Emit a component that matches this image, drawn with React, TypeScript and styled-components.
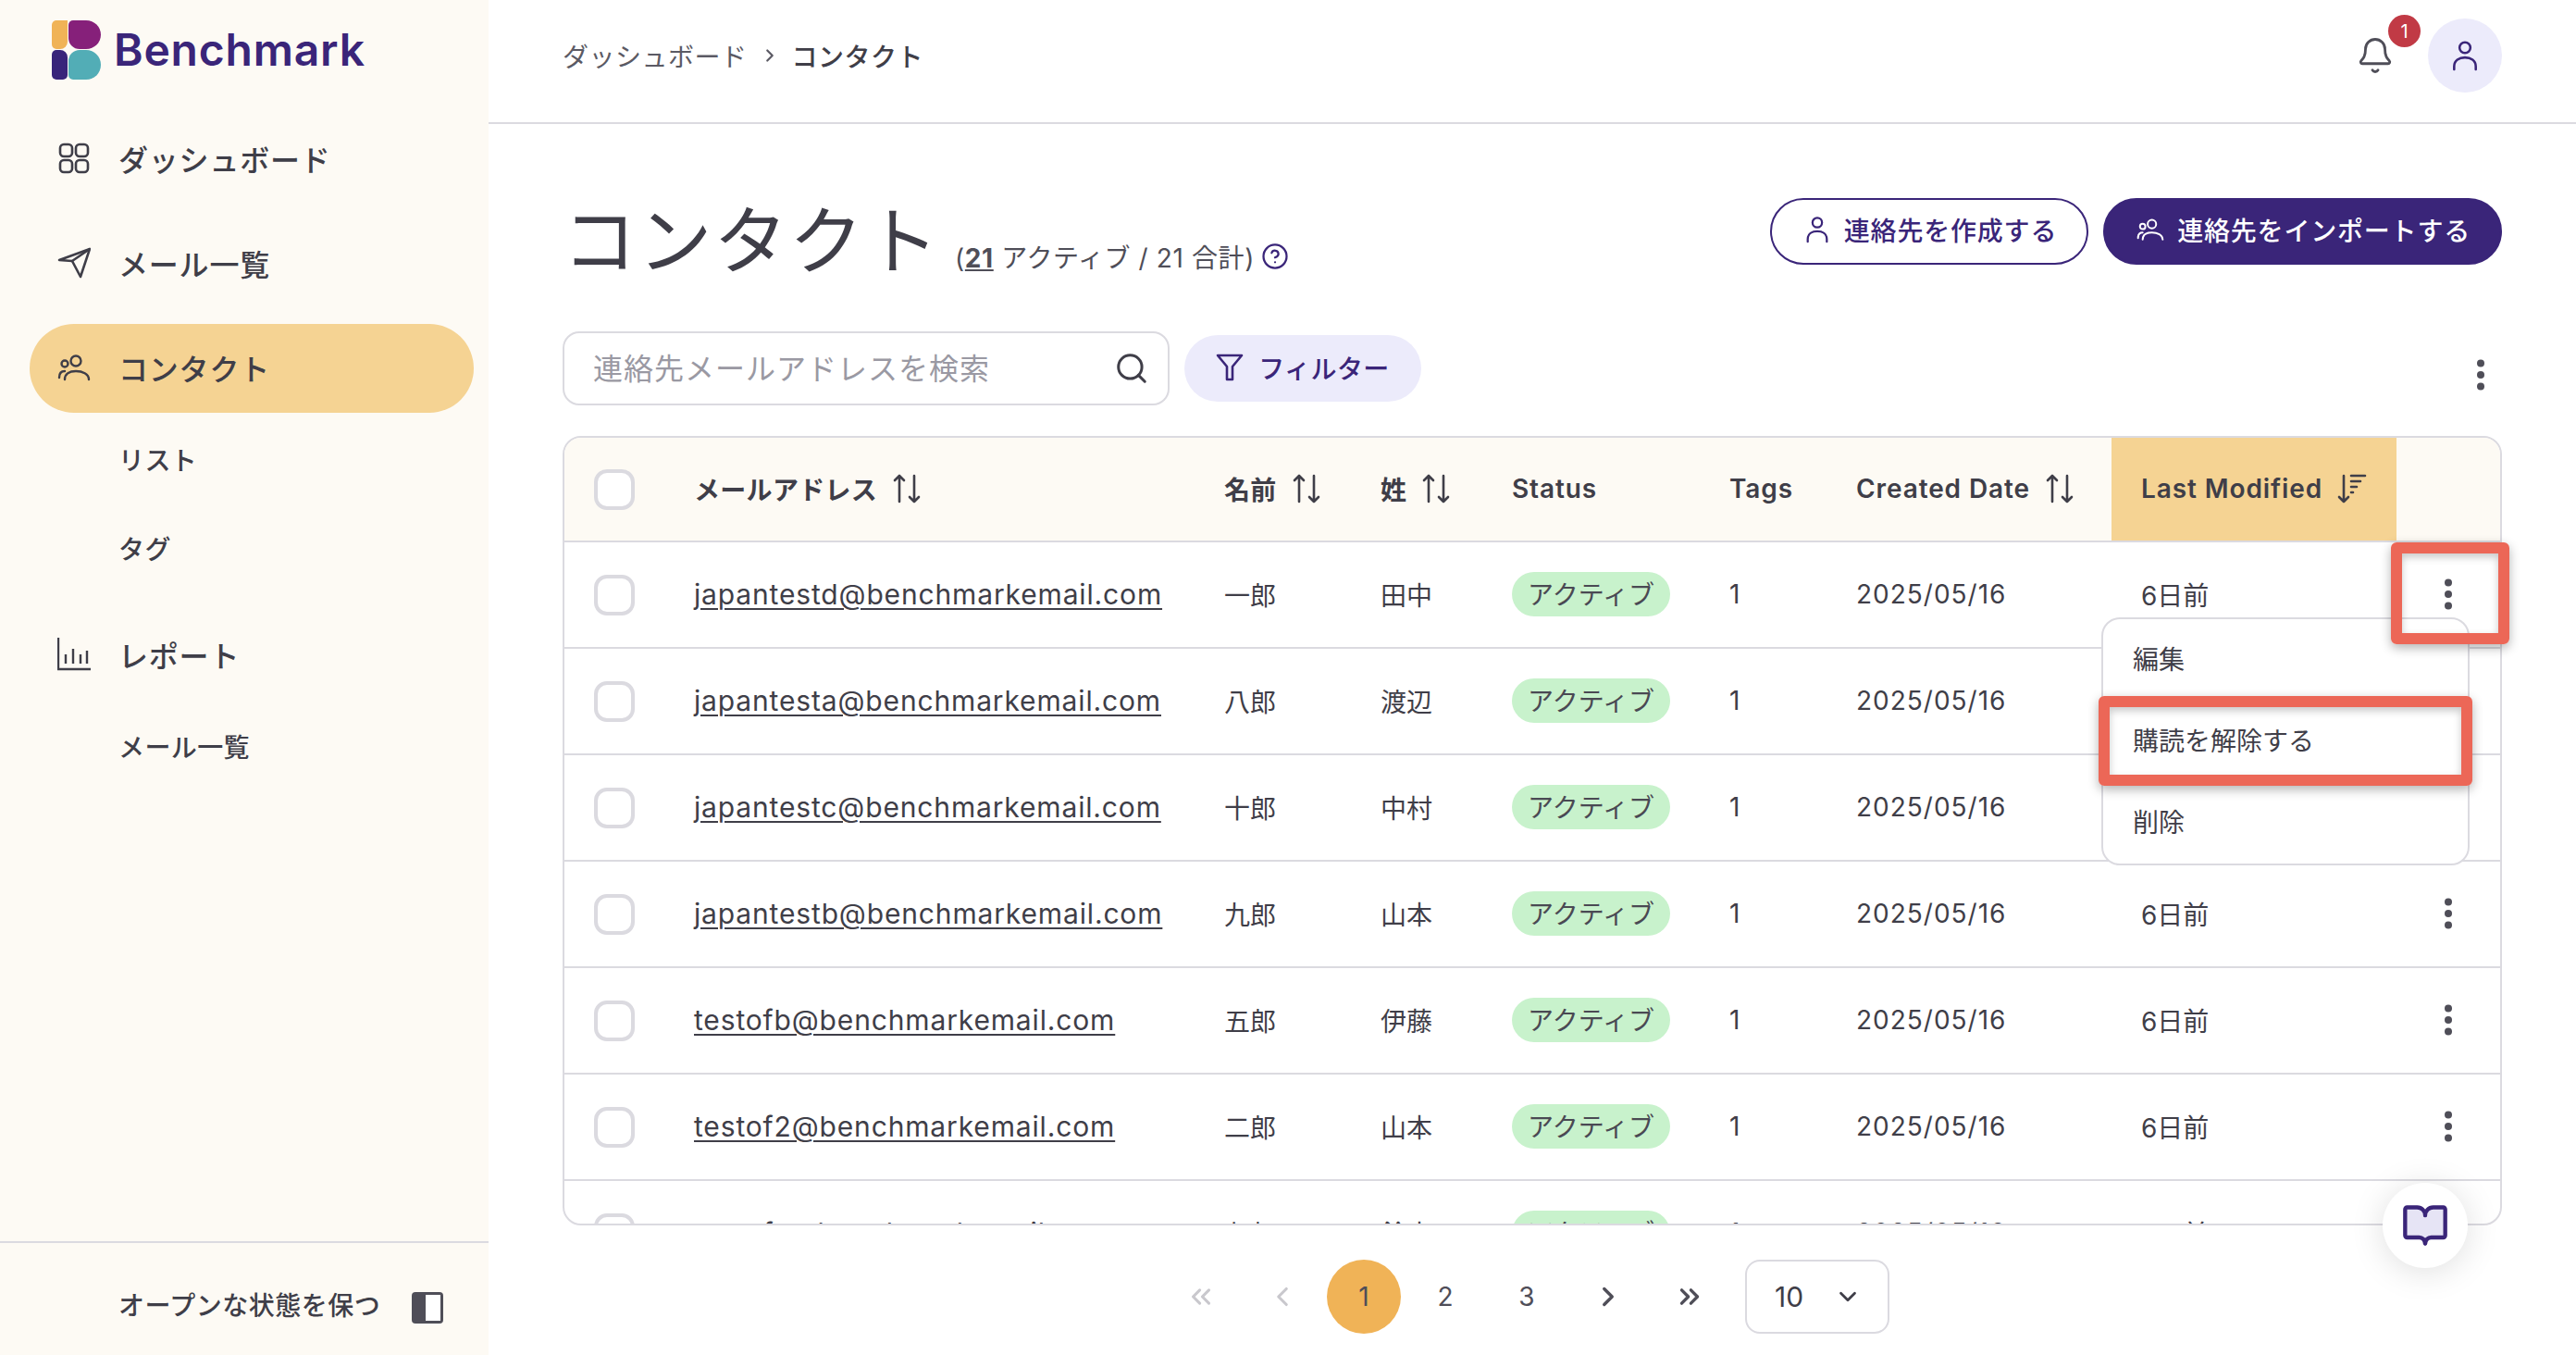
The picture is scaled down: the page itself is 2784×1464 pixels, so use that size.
import React from "react";
import styled, { createGlobalStyle } from "styled-components";
import { Bell, BookOpen, ChevronDown, ChevronLeft, ChevronRight, ChevronsLeft, ChevronsRight, CircleHelp, Search } from "lucide-react";

const ink = "#3f3e48";
const brand = "#3a2579";
const line = "#dbdae0";
const cream = "#fdfaf4";
const lavender = "#ecebfb";

const GlobalStyle = createGlobalStyle`
  html, body {
    margin: 0;
    padding: 0;
    background: #fff;
  }
  body {
    font-family: Inter, "Noto Sans CJK JP", sans-serif;
    color: ${ink};
  }
  * { box-sizing: border-box; }
`;

const Page = styled.div`
  display: flex;
  width: 2784px;
  height: 1464px;
  overflow: hidden;
  background: #fff;
`;

/* sidebar */
const Sidebar = styled.aside`
  width: 528px;
  flex-shrink: 0;
  background: ${cream};
  display: flex;
  flex-direction: column;
`;
const Brand = styled.div`
  height: 124px;
  padding: 22px 0 0 56px;
  display: flex;
  align-items: flex-start;
  gap: 14px;
`;
const BrandName = styled.span`
  font-size: 48px;
  line-height: 64px;
  font-weight: 600;
  letter-spacing: 0.8px;
  color: ${brand};
`;
const Nav = styled.nav`
  flex: 1;
  display: flex;
  flex-direction: column;
  gap: 17px;
`;
const NavGroup = styled.div`
  display: flex;
  flex-direction: column;
`;
const NavItem = styled.a<{ $active?: boolean }>`
  height: 96px;
  margin: 0 16px 0 32px;
  padding: 0 0 2px 30px;
  display: flex;
  align-items: center;
  gap: 30px;
  border-radius: 48px;
  font-size: 32px;
  font-weight: 500;
  letter-spacing: 0.8px;
  color: ${ink};
  background: ${(p) => (p.$active ? "#f5d393" : "transparent")};
`;
const SubList = styled.div`
  margin: 3px 0 2px;
  display: flex;
  flex-direction: column;
`;
const SubItem = styled.a`
  height: 96px;
  padding: 0 0 2px 128px;
  display: flex;
  align-items: center;
  font-size: 28px;
  font-weight: 500;
  letter-spacing: 0.4px;
  color: ${ink};
`;
const SidebarFoot = styled.div`
  height: 123px;
  border-top: 2px solid ${line};
  padding: 10px 48px 0 128px;
  display: flex;
  align-items: center;
  justify-content: space-between;
  font-size: 28px;
  font-weight: 500;
  letter-spacing: 0.5px;
  color: ${ink};
`;
const PanelToggle = styled.span`
  display: flex;
  margin-top: 8px;
`;

/* main */
const Main = styled.main`
  flex: 1;
  min-width: 0;
  display: flex;
  flex-direction: column;
`;
const TopBar = styled.header`
  height: 134px;
  flex-shrink: 0;
  border-bottom: 2px solid ${line};
  padding: 0 80px 12px 80px;
  display: flex;
  align-items: center;
  justify-content: space-between;
`;
const Crumbs = styled.div`
  display: flex;
  align-items: center;
  gap: 13px;
  font-size: 28px;
  letter-spacing: 0.5px;
  color: #5b5a64;
`;
const CrumbCurrent = styled.span`
  font-weight: 500;
  color: ${ink};
`;
const TopActions = styled.div`
  display: flex;
  align-items: center;
  gap: 35px;
`;
const BellWrap = styled.div`
  position: relative;
  width: 44px;
  height: 44px;
  display: flex;
  align-items: center;
  justify-content: center;
  color: #4f4e58;
`;
const Badge = styled.span`
  position: absolute;
  top: -22px;
  left: 36px;
  width: 35px;
  height: 35px;
  border-radius: 50%;
  background: #c13a45;
  color: #fff;
  font-size: 20px;
  display: flex;
  align-items: center;
  justify-content: center;
`;
const Avatar = styled.div`
  width: 80px;
  height: 80px;
  border-radius: 50%;
  background: ${lavender};
  color: ${brand};
  display: flex;
  align-items: center;
  justify-content: center;
`;
const Content = styled.div`
  flex: 1;
  padding: 80px 80px 0 80px;
  display: flex;
  flex-direction: column;
`;
const TitleRow = styled.div`
  height: 72px;
  display: flex;
  justify-content: space-between;
`;
const TitleGroup = styled.div`
  display: flex;
  align-items: baseline;
  height: 92px;
`;
const Title = styled.h1`
  margin: 0;
  font-size: 80px;
  line-height: 92px;
  font-weight: 400;
  letter-spacing: 1.6px;
  color: ${ink};
`;
const Counts = styled.span`
  margin-left: 16px;
  padding-top: 4px;
  font-size: 28px;
  letter-spacing: 0.6px;
  color: #4f4e58;
  display: inline-flex;
  align-items: center;
  gap: 7px;
`;
const CountStrong = styled.b`
  font-weight: 700;
  text-decoration: underline;
`;
const HelpIcon = styled(CircleHelp)`
  color: ${brand};
  align-self: center;
`;
const Actions = styled.div`
  display: flex;
  gap: 16px;
`;
const PillButton = styled.button<{ $solid?: boolean }>`
  height: 72px;
  padding: 0 32px 5px 34px;
  border-radius: 36px;
  border: 2px solid ${brand};
  background: ${(p) => (p.$solid ? brand : "#fff")};
  color: ${(p) => (p.$solid ? "#fff" : brand)};
  font-family: inherit;
  font-size: 28px;
  font-weight: 500;
  letter-spacing: 0.8px;
  display: flex;
  align-items: center;
  gap: 14px;
`;
const Toolbar = styled.div`
  margin-top: 72px;
  height: 80px;
  display: flex;
  align-items: center;
  gap: 16px;
`;
const SearchBox = styled.div`
  width: 656px;
  height: 80px;
  border: 2px solid ${line};
  border-radius: 18px;
  padding: 0 20px 0 31px;
  display: flex;
  align-items: center;
  justify-content: space-between;
  background: #fff;
`;
const SearchInput = styled.input`
  flex: 1;
  min-width: 0;
  border: 0;
  outline: 0;
  padding: 0;
  background: transparent;
  font-family: inherit;
  font-size: 32px;
  letter-spacing: 1px;
  color: ${ink};
  &::placeholder {
    color: #9a99a3;
    opacity: 1;
  }
`;
const FilterButton = styled.button`
  height: 72px;
  width: 256px;
  padding: 0 0 2px;
  border: 0;
  border-radius: 36px;
  background: ${lavender};
  color: ${brand};
  font-family: inherit;
  font-size: 28px;
  font-weight: 500;
  letter-spacing: 0.4px;
  display: flex;
  align-items: center;
  justify-content: center;
  gap: 16px;
`;
const ToolbarMore = styled.div`
  margin-left: auto;
  margin-right: 18px;
  margin-top: 14px;
  display: flex;
  color: #4f4e58;
`;

/* table */
const TableArea = styled.div`
  position: relative;
  margin-top: 33px;
  height: 853px;
`;
const Table = styled.div`
  height: 100%;
  border: 2px solid ${line};
  border-radius: 20px;
  overflow: hidden;
  font-size: 28px;
`;
const columns = "140px 573px 169px 142px 235px 137px 276px 308px 1fr";
const HeadRow = styled.div`
  display: grid;
  grid-template-columns: ${columns};
  height: 113px;
  border-bottom: 2px solid ${line};
  background: ${cream};
  font-weight: 600;
  letter-spacing: 0.3px;
`;
const Row = styled.div`
  display: grid;
  grid-template-columns: ${columns};
  height: 115px;
  border-bottom: 2px solid ${line};
`;
const Cell = styled.div<{ $sorted?: boolean; $inset?: boolean }>`
  display: flex;
  align-items: center;
  gap: 16px;
  padding: 0 0 2px ${(p) => (p.$inset ? "32px" : "0")};
  background: ${(p) => (p.$sorted ? "#f5d393" : "transparent")};
  letter-spacing: inherit;
`;
const CheckCell = styled(Cell)`
  padding: 0 0 0 32px;
`;
const Check = styled.span`
  width: 44px;
  height: 44px;
  border: 4px solid ${line};
  border-radius: 14px;
  background: #fff;
`;
const LatinHead = styled.span`
  letter-spacing: 0.9px;
`;
const EmailLink = styled.a`
  color: ${ink};
  text-decoration: underline;
  text-underline-offset: 4px;
  text-decoration-thickness: 2px;
  font-size: 30px;
  font-weight: 400;
  letter-spacing: 0.85px;
`;
const StatusBadge = styled.span`
  width: 171px;
  height: 48px;
  padding-bottom: 2px;
  border-radius: 24px;
  background: #c8f2cc;
  display: flex;
  align-items: center;
  justify-content: center;
  color: #4a4953;
`;
const NumText = styled.span`
  letter-spacing: 1px;
`;
const MoreCell = styled(Cell)`
  justify-content: center;
  color: #4f4e58;
`;
const Menu = styled.div`
  position: absolute;
  top: 196px;
  right: 35px;
  width: 398px;
  border: 2px solid ${line};
  border-radius: 20px;
  background: #fff;
  z-index: 2;
`;
const MenuItem = styled.div`
  height: 88px;
  padding: 0 0 5px 32px;
  display: flex;
  align-items: center;
  font-size: 28px;
  color: ${ink};
`;
const Callout = styled.div<{ $top: number; $right: number; $w: number; $h: number }>`
  position: absolute;
  top: ${(p) => p.$top}px;
  right: ${(p) => p.$right}px;
  width: ${(p) => p.$w}px;
  height: ${(p) => p.$h}px;
  border: 12px solid #ec6757;
  border-radius: 6px;
  box-shadow: 0 4px 12px rgba(0, 0, 0, 0.3), inset 0 4px 8px rgba(0, 0, 0, 0.22);
  z-index: 3;
`;
const GuideButton = styled.div`
  position: absolute;
  right: 37px;
  bottom: -46px;
  width: 92px;
  height: 92px;
  border-radius: 50%;
  background: #fff;
  box-shadow: 0 4px 36px rgba(0, 0, 0, 0.13);
  color: ${brand};
  display: flex;
  align-items: center;
  justify-content: center;
  z-index: 2;
`;

/* pagination */
const Pager = styled.div`
  margin-top: 37px;
  padding-right: 12px;
  display: flex;
  align-items: center;
  justify-content: center;
  gap: 8px;
`;
const PageBtn = styled.span<{ $current?: boolean; $muted?: boolean }>`
  width: 80px;
  height: 80px;
  border-radius: 50%;
  display: flex;
  align-items: center;
  justify-content: center;
  font-size: 28px;
  background: ${(p) => (p.$current ? "#f0b357" : "transparent")};
  color: ${(p) => (p.$muted ? "#c9c8cd" : "#4f4e58")};
`;
const PageSize = styled.div`
  margin-left: 12px;
  width: 156px;
  height: 80px;
  border: 2px solid ${line};
  border-radius: 16px;
  padding: 0 28px 0 30px;
  display: flex;
  align-items: center;
  justify-content: space-between;
  font-size: 30px;
`;

/* drawn icons */
const Logo = () => (
  <svg width="53" height="64" viewBox="0 0 53 64">
    <path d="M5 0h12v23a8 8 0 0 1-8 8H5a5 5 0 0 1-5-5V5a5 5 0 0 1 5-5z" fill="#f0b357" />
    <path d="M23 0h14c9 0 16 7 16 15.500S46 31 37 31H30a12 12 0 0 1-12-12V5a5 5 0 0 1 5-5z" fill="#86207a" />
    <path d="M9 32a8 8 0 0 1 8 8v19a5 5 0 0 1-5 5H5a5 5 0 0 1-5-5V37a5 5 0 0 1 5-5z" fill="#38247a" />
    <path d="M30 32h7c9 0 16 7 16 16s-7 16-16 16H23a5 5 0 0 1-5-5V44a12 12 0 0 1 12-12z" fill="#52adb6" />
  </svg>
);
const GridIcon = () => (
  <svg width="36" height="36" viewBox="0 0 36 36" fill="none" stroke="currentColor" strokeWidth="2.6">
    <rect x="3" y="3" width="13" height="13" rx="4" />
    <rect x="20" y="3" width="13" height="13" rx="4" />
    <rect x="3" y="20" width="13" height="13" rx="4" />
    <rect x="20" y="20" width="13" height="13" rx="4" />
  </svg>
);
const SendIcon = () => (
  <svg width="36" height="36" viewBox="0 0 36 36" fill="none" stroke="currentColor" strokeWidth="2.6" strokeLinejoin="round" strokeLinecap="round">
    <path d="M2 15 35 3 25 33 16 16z" />
    <path d="M16 16 35 3" />
  </svg>
);
const UsersIcon = ({ size = 36 }: { size?: number }) => (
  <svg width={size} height={size} viewBox="0 0 36 36" fill="none" stroke="currentColor" strokeWidth="2.4" strokeLinecap="round">
    <circle cx="20" cy="11" r="5.500" />
    <path d="M8 31c0-6 5-9 12-9s14 3 14 9" />
    <circle cx="8" cy="14" r="3.500" />
    <path d="M2 29c0-4 2-7 6-7" />
  </svg>
);
const ChartIcon = () => (
  <svg width="36" height="36" viewBox="0 0 36 36" fill="none" stroke="currentColor" strokeWidth="2.4">
    <path d="M1 0v34h35" />
    <path d="M9 18v10M17 12v16M25 18v10M32 14v14" />
  </svg>
);
const UserIcon = ({ size = 32 }: { size?: number }) => (
  <svg width={size} height={size} viewBox="0 0 32 32" fill="none" stroke="currentColor" strokeWidth="2.4" strokeLinecap="round">
    <circle cx="16" cy="8" r="5.500" />
    <path d="M5 30v-3c0-6 5-9 11-9s11 3 11 9v3" />
  </svg>
);
const SortIcon = () => (
  <svg width="32" height="32" viewBox="0 0 32 32" fill="none" stroke="currentColor" strokeWidth="2.6" strokeLinecap="round" strokeLinejoin="round">
    <path d="M8 2v28M3 7l5-5 5 5" />
    <path d="M24 30V2M19 25l5 5 5-5" />
  </svg>
);
const SortedIcon = () => (
  <svg width="32" height="32" viewBox="0 0 32 32" fill="none" stroke="currentColor" strokeWidth="2.6" strokeLinecap="round" strokeLinejoin="round">
    <path d="M7 2v28M2 25l5 5 5-5" />
    <path d="M15 2h15M15 8h10M15 14h6M15 20h2" />
  </svg>
);
const FilterIcon = () => (
  <svg width="30" height="32" viewBox="0 0 30 32" fill="none" stroke="currentColor" strokeWidth="2.6" strokeLinejoin="round">
    <path d="M2 3h26L18 15v14h-6V15z" />
  </svg>
);
const Dots = () => (
  <svg width="10" height="34" viewBox="0 0 10 34" fill="currentColor">
    <circle cx="5" cy="4.500" r="4" />
    <circle cx="5" cy="17" r="4" />
    <circle cx="5" cy="29.500" r="4" />
  </svg>
);
const PanelIcon = () => (
  <svg width="36" height="36" viewBox="0 0 36 36">
    <rect x="1" y="1" width="34" height="34" rx="4" fill="#4f4e58" />
    <rect x="16" y="4" width="16" height="28" fill="#fff" />
  </svg>
);

const rows = [
  ["japantestd@benchmarkemail.com", "一郎", "田中"],
  ["japantesta@benchmarkemail.com", "八郎", "渡辺"],
  ["japantestc@benchmarkemail.com", "十郎", "中村"],
  ["japantestb@benchmarkemail.com", "九郎", "山本"],
  ["testofb@benchmarkemail.com", "五郎", "伊藤"],
  ["testof2@benchmarkemail.com", "二郎", "山本"],
  ["testofa@benchmarkemail.com", "七郎", "鈴木"],
];

export default function App() {
  return (
    <Page>
      <GlobalStyle />
      <Sidebar>
        <Brand>
          <Logo />
          <BrandName>Benchmark</BrandName>
        </Brand>
        <Nav>
          <NavItem><GridIcon />ダッシュボード</NavItem>
          <NavItem><SendIcon />メール一覧</NavItem>
          <NavGroup>
            <NavItem $active><UsersIcon />コンタクト</NavItem>
            <SubList>
              <SubItem>リスト</SubItem>
              <SubItem>タグ</SubItem>
            </SubList>
          </NavGroup>
          <NavGroup>
            <NavItem><ChartIcon />レポート</NavItem>
            <SubList>
              <SubItem>メール一覧</SubItem>
            </SubList>
          </NavGroup>
        </Nav>
        <SidebarFoot>
          オープンな状態を保つ
          <PanelToggle><PanelIcon /></PanelToggle>
        </SidebarFoot>
      </Sidebar>

      <Main>
        <TopBar>
          <Crumbs>
            ダッシュボード
            <ChevronRight size={22} strokeWidth={2.4} />
            <CrumbCurrent>コンタクト</CrumbCurrent>
          </Crumbs>
          <TopActions>
            <BellWrap>
              <Bell size={42} strokeWidth={1.6} />
              <Badge>1</Badge>
            </BellWrap>
            <Avatar><UserIcon size={34} /></Avatar>
          </TopActions>
        </TopBar>

        <Content>
          <TitleRow>
            <TitleGroup>
              <Title>コンタクト</Title>
              <Counts>
                <span>(<CountStrong>21</CountStrong> アクティブ / 21 合計)</span>
                <HelpIcon size={30} strokeWidth={1.8} />
              </Counts>
            </TitleGroup>
            <Actions>
              <PillButton><UserIcon size={30} />連絡先を作成する</PillButton>
              <PillButton $solid><UsersIcon size={30} />連絡先をインポートする</PillButton>
            </Actions>
          </TitleRow>

          <Toolbar>
            <SearchBox>
              <SearchInput placeholder="連絡先メールアドレスを検索" readOnly />
              <Search size={38} strokeWidth={1.9} />
            </SearchBox>
            <FilterButton><FilterIcon />フィルター</FilterButton>
            <ToolbarMore><Dots /></ToolbarMore>
          </Toolbar>

          <TableArea>
            <Table>
              <HeadRow>
                <CheckCell><Check /></CheckCell>
                <Cell>メールアドレス<SortIcon /></Cell>
                <Cell>名前<SortIcon /></Cell>
                <Cell>姓<SortIcon /></Cell>
                <Cell><LatinHead>Status</LatinHead></Cell>
                <Cell><LatinHead>Tags</LatinHead></Cell>
                <Cell><LatinHead>Created Date</LatinHead><SortIcon /></Cell>
                <Cell $sorted $inset><LatinHead>Last Modified</LatinHead><SortedIcon /></Cell>
                <Cell />
              </HeadRow>
              {rows.map(([email, first, last]) => (
                <Row key={email}>
                  <CheckCell><Check /></CheckCell>
                  <Cell><EmailLink>{email}</EmailLink></Cell>
                  <Cell>{first}</Cell>
                  <Cell>{last}</Cell>
                  <Cell><StatusBadge>アクティブ</StatusBadge></Cell>
                  <Cell>1</Cell>
                  <Cell><NumText>2025/05/16</NumText></Cell>
                  <Cell $inset>6日前</Cell>
                  <MoreCell><Dots /></MoreCell>
                </Row>
              ))}
            </Table>
            <Menu>
              <MenuItem>編集</MenuItem>
              <MenuItem>購読を解除する</MenuItem>
              <MenuItem>削除</MenuItem>
            </Menu>
            <Callout $top={115} $right={-8} $w={128} $h={110} />
            <Callout $top={281} $right={32} $w={404} $h={97} />
            <GuideButton>
              <BookOpen size={52} strokeWidth={2} fill="#e6e4f5" />
            </GuideButton>
          </TableArea>

          <Pager>
            <PageBtn $muted><ChevronsLeft size={34} strokeWidth={2.2} /></PageBtn>
            <PageBtn $muted><ChevronLeft size={34} strokeWidth={2.2} /></PageBtn>
            <PageBtn $current>1</PageBtn>
            <PageBtn>2</PageBtn>
            <PageBtn>3</PageBtn>
            <PageBtn><ChevronRight size={34} strokeWidth={2.4} /></PageBtn>
            <PageBtn><ChevronsRight size={34} strokeWidth={2.4} /></PageBtn>
            <PageSize>10<ChevronDown size={30} strokeWidth={2.2} /></PageSize>
          </Pager>
        </Content>
      </Main>
    </Page>
  );
}
